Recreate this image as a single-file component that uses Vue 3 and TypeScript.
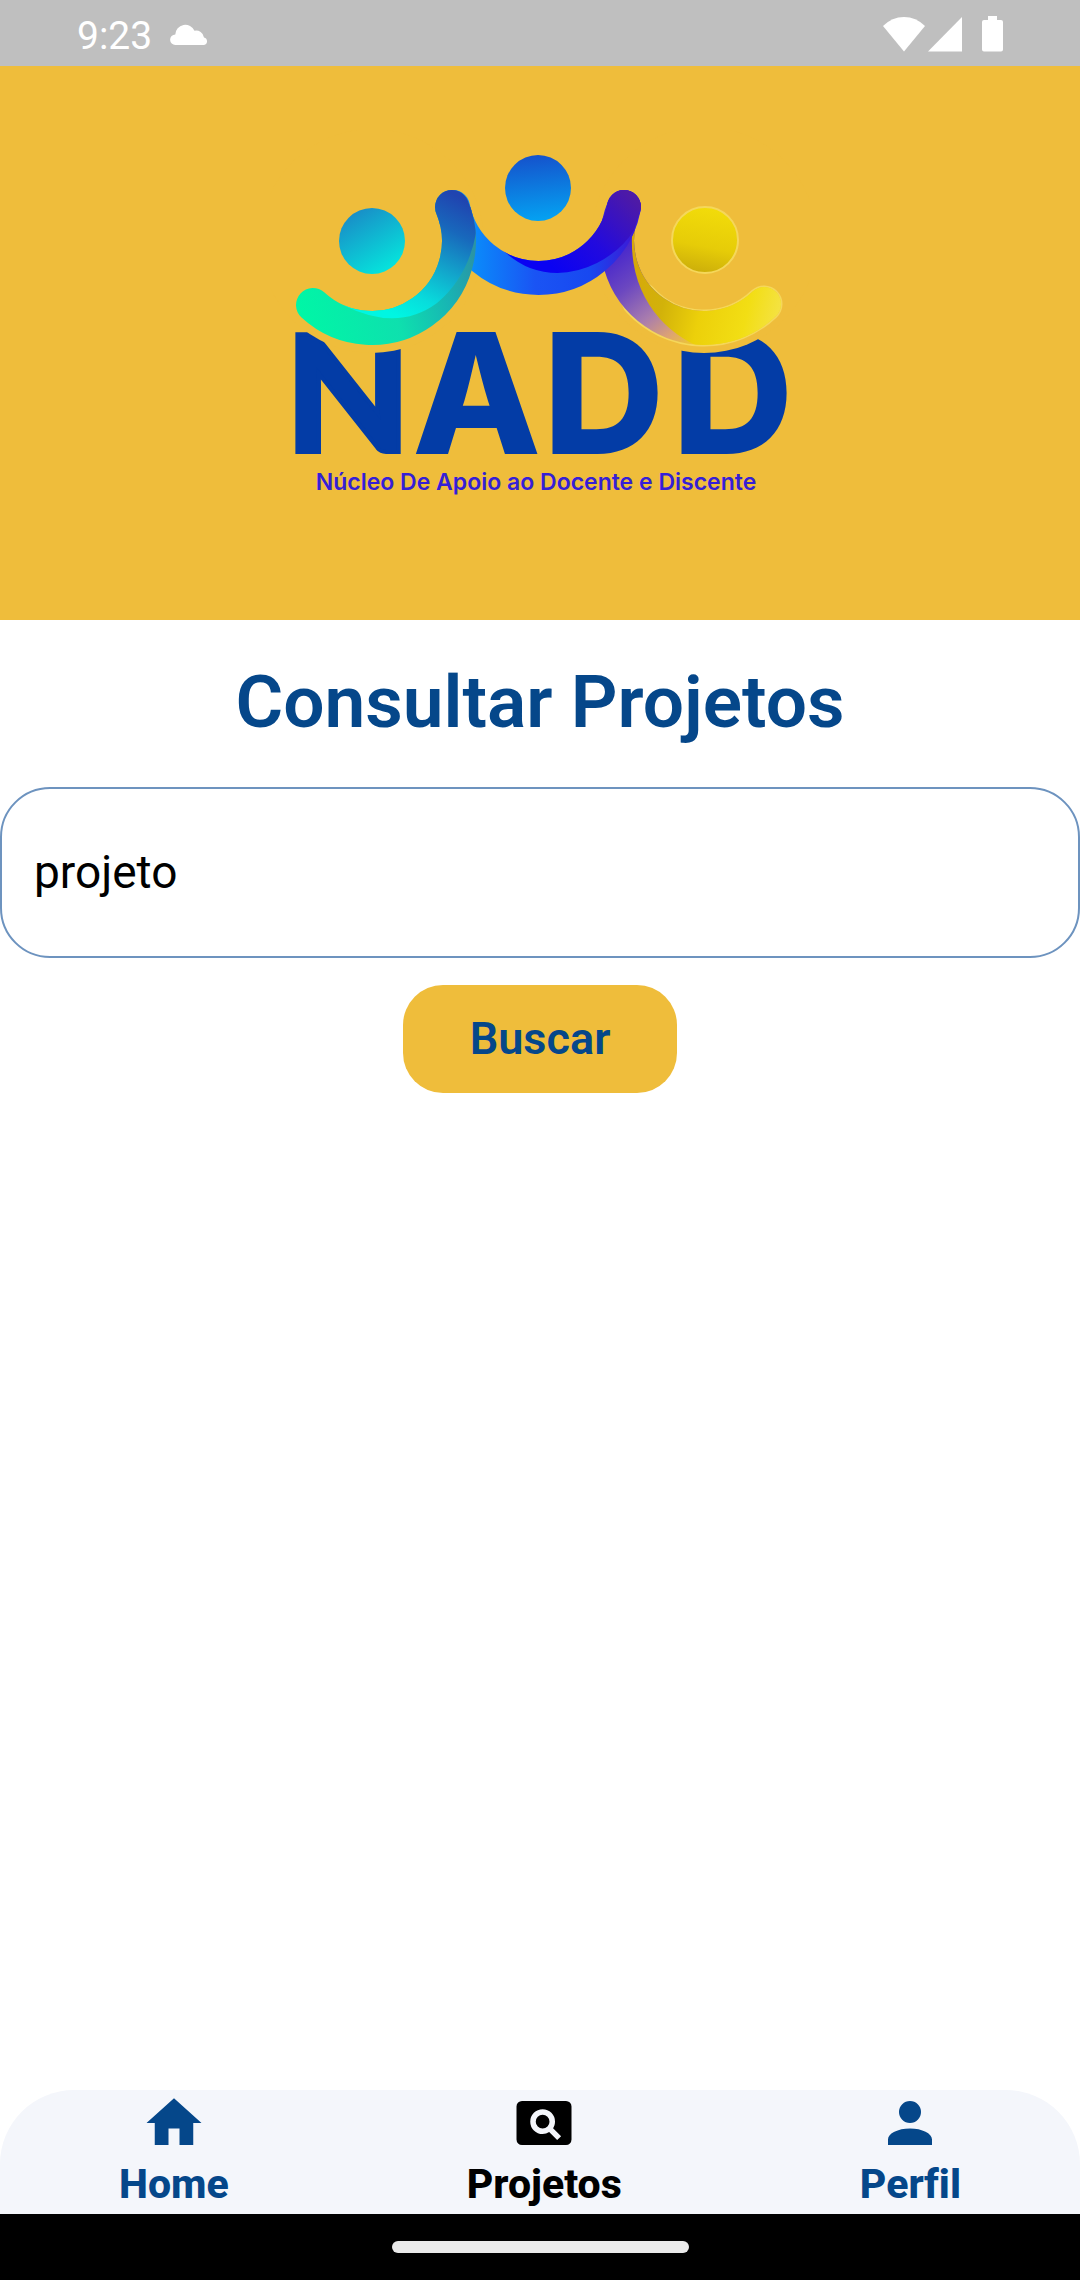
<script setup lang="ts">
import { ref } from 'vue'

interface NavItem {
  label: string
  icon: string
  active: boolean
}

const query = ref('projeto')

const navItems: NavItem[] = [
  { label: 'Home', icon: 'M10 20V14H14V20H19V12H22L12 3L2 12H5V20H10Z', active: false },
  {
    label: 'Projetos',
    icon: 'M11.5 9A2.5 2.5 0 0 0 9 11.5A2.5 2.5 0 0 0 11.500 14A2.500 2.500 0 0 0 14 11.500A2.500 2.500 0 0 0 11.500 9M20 4H4A2 2 0 0 0 2 6V18A2 2 0 0 0 4 20H20A2 2 0 0 0 22 18V6A2 2 0 0 0 20 4M16.790 18.210L13.880 15.300C13.190 15.740 12.370 16 11.500 16A4.500 4.500 0 1 1 16 11.500C16 12.380 15.740 13.190 15.300 13.880L18.210 16.790L16.790 18.210Z',
    active: true,
  },
  {
    label: 'Perfil',
    icon: 'M12 4A4 4 0 0 1 16 8A4 4 0 0 1 12 12A4 4 0 0 1 8 8A4 4 0 0 1 12 4M12 14C16.42 14 20 15.79 20 18V20H4V18C4 15.79 7.58 14 12 14Z',
    active: false,
  },
]
</script>

<template>
  <div class="screen">
    <div class="status">
      <div class="status-left">
        <span class="time">9:23</span>
        <svg class="cloud" viewBox="0 0 38 21" aria-hidden="true">
          <path d="M5.500 21A5.300 5.300 0 0 1 5.300 10.400A10 10 0 0 1 24.500 6.800A8 8 0 0 1 34 13.400A3.900 3.900 0 0 1 34 21Z" />
        </svg>
      </div>
      <div class="status-right">
        <svg class="wifi" viewBox="0 0 42 36" aria-hidden="true">
          <path d="M0 10Q9 1 21 1T42 10L21 35.500Z" />
        </svg>
        <svg class="signal" viewBox="0 0 34 36" aria-hidden="true">
          <path d="M34 1V35.500H0Z" />
        </svg>
        <svg class="battery" viewBox="0 0 21 36" aria-hidden="true">
          <path d="M6 0H15V4H19Q21 4 21 6V33.500Q21 35.500 19 35.500H2Q0 35.500 0 33.500V6Q0 4 2 4H6Z" />
        </svg>
      </div>
    </div>

    <header class="banner">
      <svg class="logo" viewBox="270 130 540 390" role="img" aria-label="NADD">
        <defs>
          <linearGradient id="headLeft" x1="0" y1="0" x2="0.6" y2="1">
            <stop offset="0" stop-color="#1c80c4" />
            <stop offset="1" stop-color="#06e2dc" />
          </linearGradient>
          <linearGradient id="headMid" x1="0.4" y1="0" x2="0.5" y2="1">
            <stop offset="0" stop-color="#1552cc" />
            <stop offset="1" stop-color="#04a2f2" />
          </linearGradient>
          <linearGradient id="headRight" x1="0.6" y1="0" x2="0.4" y2="1">
            <stop offset="0" stop-color="#f2dc0a" />
            <stop offset="0.6" stop-color="#e6cc08" />
            <stop offset="1" stop-color="#ccae0a" />
          </linearGradient>
          <linearGradient id="leftBase" gradientUnits="userSpaceOnUse" x1="300" y1="310" x2="476" y2="260">
            <stop offset="0" stop-color="#00f6a6" />
            <stop offset="0.5" stop-color="#0ee0ae" />
            <stop offset="0.8" stop-color="#18b4b4" />
            <stop offset="1" stop-color="#2a94a4" />
          </linearGradient>
          <linearGradient id="leftInner" gradientUnits="userSpaceOnUse" x1="455" y1="195" x2="395" y2="315">
            <stop offset="0" stop-color="#2044b0" />
            <stop offset="0.25" stop-color="#1868bc" />
            <stop offset="0.55" stop-color="#12a8cc" />
            <stop offset="0.8" stop-color="#08dcdc" />
            <stop offset="1" stop-color="#00f6e2" />
          </linearGradient>
          <linearGradient id="midBase" gradientUnits="userSpaceOnUse" x1="472" y1="250" x2="630" y2="250">
            <stop offset="0" stop-color="#0a8cfa" />
            <stop offset="0.4" stop-color="#1a54f4" />
            <stop offset="0.75" stop-color="#1848f0" />
            <stop offset="1" stop-color="#3a1cd8" />
          </linearGradient>
          <linearGradient id="midInner" gradientUnits="userSpaceOnUse" x1="555" y1="270" x2="630" y2="195">
            <stop offset="0" stop-color="#0a02f2" />
            <stop offset="0.45" stop-color="#220ade" />
            <stop offset="1" stop-color="#4e1aa6" />
          </linearGradient>
          <linearGradient id="rightBase" gradientUnits="userSpaceOnUse" x1="612" y1="240" x2="695" y2="345">
            <stop offset="0" stop-color="#3c1cd0" />
            <stop offset="0.35" stop-color="#6c48c0" />
            <stop offset="0.62" stop-color="#a87cae" />
            <stop offset="0.82" stop-color="#dca274" />
            <stop offset="1" stop-color="#f0cc28" />
          </linearGradient>
          <linearGradient id="rightInner" gradientUnits="userSpaceOnUse" x1="632" y1="270" x2="780" y2="305">
            <stop offset="0" stop-color="#d6a80a" />
            <stop offset="0.25" stop-color="#d2b20a" />
            <stop offset="0.5" stop-color="#ecd00a" />
            <stop offset="0.8" stop-color="#f2de14" />
            <stop offset="1" stop-color="#f4e240" />
          </linearGradient>
          <clipPath id="leftClip">
            <path d="M345 306Q398 332 437 303Q468 277 476 233L484 180H400L345 250Z" />
          </clipPath>
          <clipPath id="midClip">
            <path d="M470 208Q498 255 530 268Q563 280 597 263Q622 250 634 230L650 180H500Z" />
          </clipPath>
          <clipPath id="rightClip">
            <path d="M632 236Q630 285 660 319Q680 341 712 352H800V220H640Z" />
          </clipPath>
        </defs>

        <text class="wordmark" x="285 412 543 672" y="452 454 454 454"><tspan class="initial">N</tspan>ADD</text>

        <g class="cutout">
          <circle cx="372" cy="241" r="112" />
          <circle cx="704" cy="240" r="113" />
        </g>

        <g class="arms">
          <path class="halo" d="M640 300A87 87 0 0 0 764 304" />
          <path stroke="url(#rightBase)" d="M624 207A87 87 0 0 0 764 304" />
          <path stroke="url(#rightInner)" clip-path="url(#rightClip)" d="M624 207A87 87 0 0 0 764 304" />
          <path stroke="url(#midBase)" d="M453 207A87 87 0 0 0 624 207" />
          <path stroke="url(#midInner)" clip-path="url(#midClip)" d="M453 207A87 87 0 0 0 624 207" />
          <path stroke="url(#leftBase)" d="M313 305A87 87 0 0 0 452 207" />
          <path stroke="url(#leftInner)" clip-path="url(#leftClip)" d="M313 305A87 87 0 0 0 452 207" />
        </g>

        <circle cx="372" cy="241" r="33" fill="url(#headLeft)" />
        <circle cx="538" cy="188" r="33" fill="url(#headMid)" />
        <circle cx="705" cy="240" r="33" fill="url(#headRight)" stroke="#f5d75a" stroke-width="2" />

        <text class="tagline" x="536" y="490" text-anchor="middle">Núcleo De Apoio ao Docente e Discente</text>
      </svg>
    </header>

    <main class="content">
      <h1 class="title">Consultar Projetos</h1>
      <form class="search" @submit.prevent>
        <input v-model="query" class="field" type="text" aria-label="Consultar Projetos" />
        <button class="submit" type="submit">Buscar</button>
      </form>
    </main>

    <nav class="tabs">
      <a
        v-for="item in navItems"
        :key="item.label"
        href="#"
        class="tab"
        :class="{ active: item.active }"
      >
        <svg class="tab-icon" viewBox="0 0 24 24" aria-hidden="true"><path :d="item.icon" /></svg>
        <span>{{ item.label }}</span>
      </a>
    </nav>

    <div class="system-bar"><div class="handle"></div></div>
  </div>
</template>

<style>
body {
  margin: 0;
  background: #fff;
}
</style>

<style scoped>
.screen {
  min-height: 100vh;
  display: flex;
  flex-direction: column;
  background: #fff;
  color: #05478a;
  font-family: Roboto, "Liberation Sans", sans-serif;
}

.status {
  display: flex;
  justify-content: space-between;
  height: 66px;
  padding: 0 77px;
  background: #bfbfbf;
  color: #fff;
  fill: #fff;
}

.status-left {
  display: flex;
  align-items: center;
  gap: 18px;
  padding-top: 6px;
}

.time {
  font-size: 39px;
  line-height: 48px;
}

.cloud {
  width: 38px;
  height: 21px;
  margin-bottom: 4px;
}

.status-right {
  display: flex;
  align-items: center;
  padding-top: 2px;
}

.wifi {
  width: 42px;
  height: 36px;
}

.signal {
  width: 34px;
  height: 36px;
  margin-left: 3px;
}

.battery {
  width: 21px;
  height: 36px;
  margin-left: 20px;
}

.banner {
  display: flex;
  justify-content: center;
  padding: 64px 0 100px;
  background: #efbd3b;
}

.logo {
  width: 540px;
  height: 390px;
}

.wordmark {
  font-family: Inter, sans-serif;
  font-size: 168px;
  font-weight: 800;
  fill: #033ca6;
}

.initial {
  font-family: Lato, sans-serif;
  font-size: 163px;
  font-weight: 900;
  stroke: #033ca6;
  stroke-width: 4px;
}

.tagline {
  font-family: Inter, sans-serif;
  font-size: 23px;
  font-weight: 600;
  fill: #351fd6;
}

.cutout {
  fill: #efbd3b;
}

.arms {
  fill: none;
  stroke-width: 34px;
  stroke-linecap: round;
}

.arms .halo {
  stroke: #f5d75a;
  stroke-width: 37px;
}

.content {
  flex: 1;
}

.title {
  margin: 0;
  padding: 38px 0 41px;
  font-size: 73px;
  line-height: 88px;
  font-weight: 600;
  text-align: center;
}

.search {
  display: flex;
  flex-direction: column;
  align-items: center;
  gap: 27px;
}

.field {
  box-sizing: border-box;
  width: 100%;
  height: 171px;
  padding: 0 32px 2px;
  border: 2px solid #6d93bf;
  border-radius: 50px;
  outline: none;
  background: #fff;
  color: #000;
  font-family: inherit;
  font-size: 46px;
}

.submit {
  height: 108px;
  padding: 0 67px 2px;
  border: 0;
  border-radius: 40px;
  background: #efbd3b;
  color: #05478a;
  font-family: inherit;
  font-size: 45px;
  font-weight: 600;
}

.tabs {
  display: flex;
  justify-content: space-around;
  height: 124px;
  border-radius: 74px 74px 0 0;
  background: #f4f6fb;
}

.tab {
  display: flex;
  flex-direction: column;
  align-items: center;
  color: #05478a;
  fill: currentColor;
  font-size: 41px;
  line-height: 56px;
  font-weight: 800;
  font-variant-ligatures: none;
  text-decoration: none;
}

.tab.active {
  color: #000;
}

.tab-icon {
  width: 66px;
  height: 66px;
}

.system-bar {
  display: flex;
  align-items: center;
  justify-content: center;
  height: 66px;
  background: #000;
}

.handle {
  width: 297px;
  height: 12px;
  border-radius: 6px;
  background: #eaeaea;
}
</style>
